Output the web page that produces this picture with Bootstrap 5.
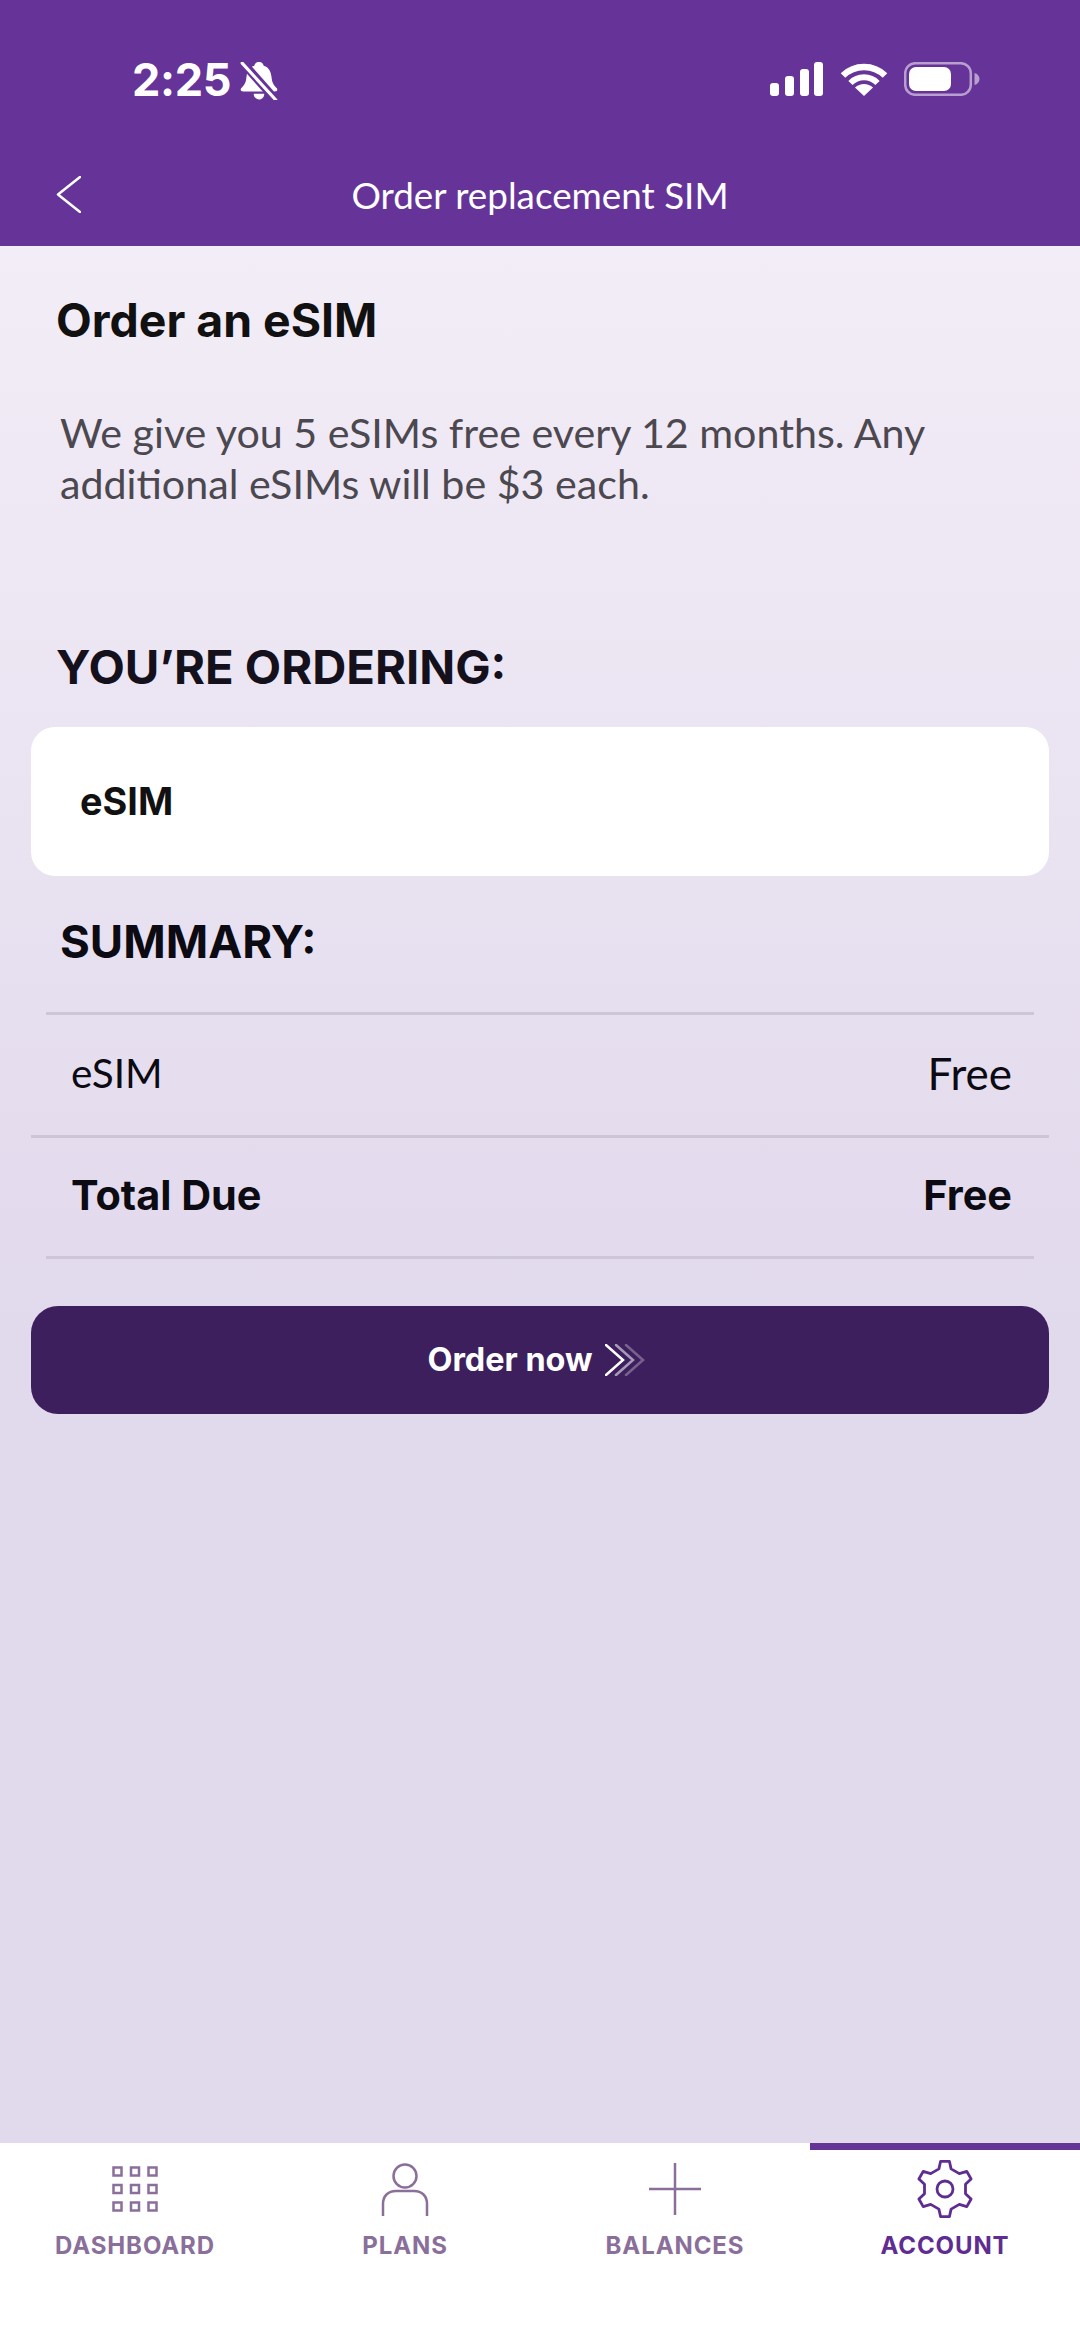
<!DOCTYPE html>
<html lang="en">
<head>
    <meta charset="UTF-8">
    <meta name="viewport" content="width=device-width, initial-scale=1.0">
    <title>Order replacement SIM</title>
    <link href="https://cdn.jsdelivr.net/npm/bootstrap@5.3.0/dist/css/bootstrap.min.css" rel="stylesheet">
    <style>
        body { font-family: "Lato", "Liberation Sans", sans-serif; background: #fff; }
        .app-shell { height: 2347px; }
        .top-area { background: #663399; height: 246px; color: #fff; }
        .status-row { padding: 62px 100px 0 132px; height: 98px; }
        .clock { font-family: "Inter", sans-serif; font-weight: 700; font-size: 45px; line-height: 36px; letter-spacing: -.3px; }
        .title-row { padding: 78px 0 0 56px; }
        .title-row .page-title { font-size: 36.8px; line-height: 36px; font-weight: 400; margin-right: 81px; }
        .main-area { background: linear-gradient(180deg, #f3edf7 0%, #e1d9ec 58%, #e1d9ec 100%); padding: 0 31px; }
        .order-title { font-family: "Inter", sans-serif; font-size: 46.4px; line-height: 52px; font-weight: 700; color: #111; padding: 48px 0 0 25px; margin: 0; }
        .order-text { font-size: 41.2px; line-height: 51px; color: #4b4850; padding: 61px 20px 0 29px; margin: 0; }
        .ordering-title { font-family: "Inter", sans-serif; font-size: 47.2px; line-height: 52px; font-weight: 700; color: #14111c; padding: 132px 0 0 25px; margin: 0; }
        .sim-box { font-family: "Inter", sans-serif; background: #fff; border-radius: 24px; height: 149px; margin-top: 34px; padding-left: 49px; font-size: 37.8px; font-weight: 700; color: #111; }
        .summary-title { font-family: "Inter", sans-serif; font-size: 45.6px; line-height: 52px; font-weight: 700; color: #0c0a12; padding: 40px 0 0 29px; margin: 0; }
        .summary-list { margin-top: 44px; }
        .sum-row { font-size: 40.5px; color: #0c0a12; padding: 0 40px 4px; height: 121px; }
        .sum-row.first { border-top: 3px solid #cdc6d6; height: 123px; margin: 0 15px; padding: 0 22px 4px 25px; }
        .sum-row.total { font-family: "Inter", sans-serif; font-size: 41.4px; border-top: 3px solid #cdc6d6; font-weight: 700; padding-right: 37px; }
        .free-text { font-size: 44px; }
        .sum-end { border-top: 3px solid #cdc6d6; margin: 0 15px; }
        .order-btn { background: #3d1f5e; border: 0; border-radius: 27px; height: 108px; margin-top: 47px; padding-right: 20px; gap: 12px; color: #fff; font-family: "Inter", sans-serif; font-size: 32.4px; font-weight: 700; }
        .order-btn:hover { background: #3d1f5e; color: #fff; }
        .tab-bar { height: 204px; background: #fff; }
        .tab-item { font-family: "Inter", sans-serif; height: 204px; color: #8a6f9a; font-size: 24px; font-weight: 700; letter-spacing: .9px; border-top: 7px solid transparent; padding-top: 9px; }
        .tab-item.active-tab { color: #5f2d91; border-top-color: #663399; }
        .tab-icon { height: 60px; margin-bottom: 15px; }
        .tab-label { line-height: 24px; }
    </style>
</head>
<body>
    <div class="app-shell d-flex flex-column">
        <div class="top-area flex-shrink-0">
            <div class="status-row d-flex justify-content-between align-items-start">
                <div class="d-flex align-items-start">
                    <span class="clock">2:25</span>
                    <svg class="ms-2" width="40" height="38" viewBox="0 0 38 36">
                        <path fill="#fff" d="M19 0c3 0 4 2 4.500 3.500C29 5 30.500 10 31 15c.5 5 2 7 5 10 1 2 0 3-2 3H4c-2 0-3-1-2-3 3-3 4.500-5 5-10 .5-5 2-10 7.500-11.500C15 2 16 0 19 0z"/>
                        <path fill="#fff" d="M14 30h10c0 3-2 5.500-5 5.500s-5-2.500-5-5.500z"/>
                        <path stroke="#663399" stroke-width="8" d="M3 0l32 36"/>
                        <path stroke="#fff" stroke-width="3" stroke-linecap="round" d="M3 1l32 35"/>
                    </svg>
                </div>
                <div class="d-flex align-items-start gap-3">
                    <svg width="54" height="34" viewBox="0 0 54 34" fill="#fff">
                        <rect x="0" y="21" width="9" height="13" rx="3"/>
                        <rect x="15" y="14" width="9" height="20" rx="3"/>
                        <rect x="30" y="7" width="9" height="27" rx="3"/>
                        <rect x="44" y="0" width="9" height="34" rx="3"/>
                    </svg>
                    <svg width="48" height="34" viewBox="0 0 48 34">
                        <path fill="none" stroke="#fff" stroke-width="6.500" d="M3 13.500A30 30 0 0 1 45 13.500"/>
                        <path fill="none" stroke="#fff" stroke-width="6" d="M10.500 21A19 19 0 0 1 37.500 21"/>
                        <path fill="#fff" d="M24 34L15 25.500A13 13 0 0 1 33 25.500z"/>
                    </svg>
                    <svg width="76" height="34" viewBox="0 0 76 34">
                        <rect x="1.200" y="1.200" width="65.600" height="31.600" rx="10" fill="none" stroke="#b79fd0" stroke-width="2.500"/>
                        <rect x="5" y="5" width="42" height="24" rx="7" fill="#fff"/>
                        <path fill="#b79fd0" d="M70.500 11c3 .8 5 3 5 6s-2 5.200-5 6z"/>
                    </svg>
                </div>
            </div>
            <div class="title-row d-flex align-items-center">
                <svg width="25" height="37" viewBox="0 0 25 37" fill="none" stroke="#fff" stroke-width="2.500" stroke-linecap="round" stroke-linejoin="round">
                    <path d="M24 1L2 18.500 24 36"/>
                </svg>
                <div class="page-title flex-grow-1 text-center">Order replacement SIM</div>
            </div>
        </div>

        <div class="main-area flex-grow-1">
            <h1 class="order-title">Order an eSIM</h1>
            <p class="order-text">We give you 5 eSIMs free every 12 months. Any additional eSIMs will be $3 each.</p>
            <h2 class="ordering-title">YOU’RE ORDERING:</h2>
            <div class="sim-box d-flex align-items-center">eSIM</div>
            <h2 class="summary-title">SUMMARY:</h2>
            <div class="summary-list">
                <div class="sum-row first d-flex justify-content-between align-items-center">
                    <span>eSIM</span><span class="free-text">Free</span>
                </div>
                <div class="sum-row total d-flex justify-content-between align-items-center">
                    <span>Total Due</span><span>Free</span>
                </div>
                <div class="sum-end"></div>
            </div>
            <button class="order-btn btn w-100 d-flex justify-content-center align-items-center">
                <span>Order now</span>
                <svg width="40" height="32" viewBox="0 0 40 32" fill="none" stroke="#fff" stroke-width="2.500" stroke-linecap="round">
                    <path opacity=".3" d="M21 1l17 15-17 15"/>
                    <path opacity=".55" d="M11 1l17 15-17 15"/>
                    <path d="M1 1l17 15-17 15"/>
                </svg>
            </button>
        </div>

        <nav class="tab-bar row g-0 flex-shrink-0 text-center">
            <div class="col-3 tab-item">
                <div class="tab-icon d-flex justify-content-center align-items-center">
                    <svg width="46" height="46" viewBox="0 0 46 46" fill="none" stroke="#8a6f9a" stroke-width="2.500">
                        <rect x="1.500" y="1.500" width="8" height="8"/><rect x="19" y="1.500" width="8" height="8"/><rect x="36.500" y="1.500" width="8" height="8"/>
                        <rect x="1.500" y="19" width="8" height="8"/><rect x="19" y="19" width="8" height="8"/><rect x="36.500" y="19" width="8" height="8"/>
                        <rect x="1.500" y="36.500" width="8" height="8"/><rect x="19" y="36.500" width="8" height="8"/><rect x="36.500" y="36.500" width="8" height="8"/>
                    </svg>
                </div>
                <div class="tab-label">DASHBOARD</div>
            </div>
            <div class="col-3 tab-item">
                <div class="tab-icon d-flex justify-content-center align-items-center">
                    <svg width="48" height="53" viewBox="0 0 48 53" fill="none" stroke="#8a6f9a" stroke-width="2.500">
                        <circle cx="24" cy="13" r="11.500"/>
                        <path d="M2 53V41c0-8 5-13 13-13h18c8 0 13 5 13 13v12"/>
                    </svg>
                </div>
                <div class="tab-label">PLANS</div>
            </div>
            <div class="col-3 tab-item">
                <div class="tab-icon d-flex justify-content-center align-items-center">
                    <svg width="52" height="52" viewBox="0 0 52 52" fill="none" stroke="#8a6f9a" stroke-width="2.500">
                        <path d="M26 0v52M0 26h52"/>
                    </svg>
                </div>
                <div class="tab-label">BALANCES</div>
            </div>
            <div class="col-3 tab-item active-tab">
                <div class="tab-icon d-flex justify-content-center align-items-center">
                    <svg width="56" height="60" viewBox="-1 -1 56 60" fill="none" stroke="#5f2d91" stroke-width="2.800" stroke-linejoin="round">
                        <path d="M20.900 8.900L22.600 1.300H31.400L33.100 8.900 41.300 13.600 48.800 11.400 53.100 19 47.500 24.300V33.700L53.100 39 48.800 46.600 41.300 44.400 33.100 49.100 31.400 56.700H22.600L20.900 49.100 12.700 44.400 5.200 46.600 .9 39 6.500 33.700V24.300L.9 19 5.200 11.400 12.700 13.600z"/>
                        <circle cx="27" cy="29" r="8"/>
                    </svg>
                </div>
                <div class="tab-label">ACCOUNT</div>
            </div>
        </nav>
    </div>
    <script src="https://cdn.jsdelivr.net/npm/bootstrap@5.3.0/dist/js/bootstrap.bundle.min.js"></script>
</body>
</html>
